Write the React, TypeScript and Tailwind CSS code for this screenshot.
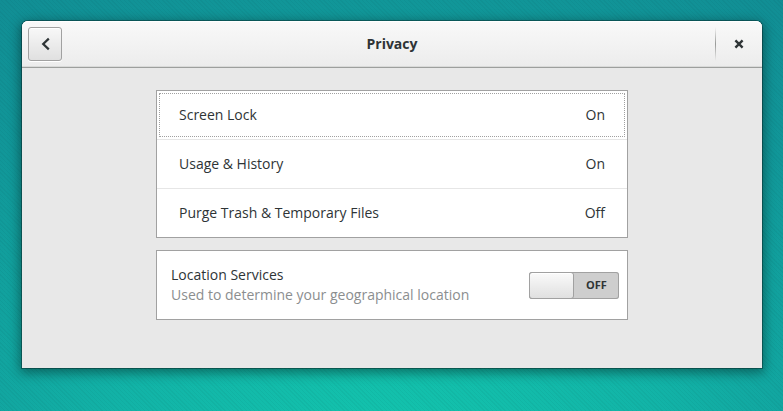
import { useState } from "react";

const rows = [
  { label: "Screen Lock", value: "On" },
  { label: "Usage & History", value: "On" },
  { label: "Purge Trash & Temporary Files", value: "Off" },
];

function HeaderBar() {
  return (
    <header className="grid grid-cols-[1fr_auto_1fr] items-center rounded-t-md border-b border-[#9d9f9d] bg-linear-to-b from-[#f9f9f9] to-[#ececec] p-1.5 shadow-[inset_0_1px_0_#ffffff,inset_0_-1px_0_#d9dad9]">
      <button
        type="button"
        aria-label="Back"
        className="flex size-[34px] items-center justify-center rounded-[3px] border border-[#a1a1a1] bg-linear-to-b from-[#f8f8f8] to-[#e0e0e0] shadow-[0_1px_0_#ffffff,inset_0_1px_0_#ffffff]"
      >
        <svg width="16" height="16" viewBox="0 0 16 16" fill="none" stroke="#2e3436" strokeWidth="2.2" aria-hidden="true">
          <path d="M11.8 2.6 6.2 8l5.6 5.4" />
        </svg>
      </button>
      <h1 className="text-sm font-bold">Privacy</h1>
      <div className="flex items-center justify-end gap-1.5">
        <div className="h-[34px] w-px bg-linear-to-b from-transparent via-[#979997] to-transparent" />
        <button type="button" aria-label="Close" className="flex size-[34px] items-center justify-center">
          <svg width="16" height="16" viewBox="0 0 16 16" fill="none" stroke="#2e3436" strokeWidth="2.4" aria-hidden="true">
            <path d="m4.4 4.4 7.2 7.2M11.6 4.4l-7.2 7.2" />
          </svg>
        </button>
      </div>
    </header>
  );
}

function PrivacyList() {
  return (
    <ul className="divide-y divide-[#e6e6e6] border border-[#a1a1a1] bg-white">
      {rows.map((row, i) => (
        <li key={row.label} className="p-0.5">
          <button
            type="button"
            className={
              "flex h-11 w-full items-center justify-between rounded-[1px] border border-dotted px-[19px] text-sm " +
              (i === 0 ? "border-[#a0a0a0]" : "border-transparent")
            }
          >
            <span>{row.label}</span>
            <span>{row.value}</span>
          </button>
        </li>
      ))}
    </ul>
  );
}

function LocationPanel() {
  const [on, setOn] = useState(false);
  return (
    <section className="flex items-center justify-between border border-[#a1a1a1] bg-white py-3.5 pr-2 pl-3.5">
      <div className="text-sm">
        <label htmlFor="location">Location Services</label>
        <p className="text-[#8b8e8f]">Used to determine your geographical location</p>
      </div>
      <div
        className={
          "relative flex h-[27px] w-[90px] items-stretch rounded-[3px] text-[11px] font-bold shadow-[inset_0_0_0_1px_#a1a1a1] " +
          (on ? "flex-row-reverse bg-[#4a90d9] text-white" : "bg-[#cecece]")
        }
      >
        <span className="w-[45px] rounded-[3px] border border-[#a1a1a1] bg-linear-to-b from-[#fafafa] to-[#e0e0e0] shadow-[inset_0_1px_0_#ffffff]" />
        <span className="flex flex-1 items-center justify-center">{on ? "ON" : "OFF"}</span>
        <input
          id="location"
          type="checkbox"
          role="switch"
          checked={on}
          onChange={() => setOn(!on)}
          className="absolute inset-0 size-full cursor-pointer opacity-0"
        />
      </div>
    </section>
  );
}

export default function App() {
  return (
    <div className="flex min-h-screen flex-col bg-[repeating-linear-gradient(45deg,rgba(0,0,0,0.035)_0px,rgba(0,0,0,0.035)_1px,transparent_1px,transparent_3px),radial-gradient(ellipse_90%_150%_at_50%_115%,#13c6ae_0%,#12b3a7_40%,#119799_75%,#118b93_100%)] pt-[21px] pr-[21px] pb-[43px] pl-[22px] font-['Open_Sans','Noto_Sans',sans-serif] text-[#2e3436]">
      <main className="flex flex-1 flex-col rounded-t-md bg-[#e8e8e8] shadow-[0_0_0_1px_rgba(0,0,0,0.3),0_3px_12px_2px_rgba(0,0,0,0.4)]">
        <HeaderBar />
        <div className="mx-auto flex w-full max-w-[472px] flex-col gap-3 pt-[22px] pb-12">
          <PrivacyList />
          <LocationPanel />
        </div>
      </main>
    </div>
  );
}
